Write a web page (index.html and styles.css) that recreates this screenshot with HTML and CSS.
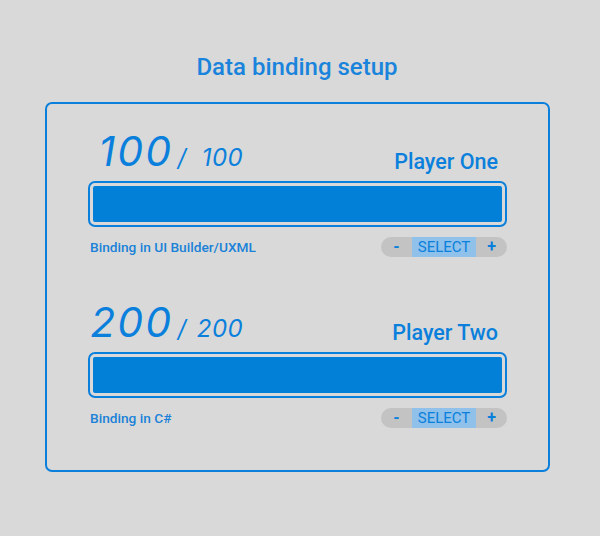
FILE: index.html
```html
<!DOCTYPE html>
<html lang="en">

<head>
    <meta charset="UTF-8">
    <meta name="viewport" content="width=device-width, initial-scale=1.0">
    <title>Data binding setup</title>
    <link rel="stylesheet" href="styles.css">
</head>

<body>
    <h1 class="titulo">Data binding setup</h1>
    <div class="panel">
        <section class="jugador">
            <div class="cabecera">
                <div class="vida">
                    <span class="actual">100</span>
                    <span class="barra-div">/</span><span class="maximo">100</span>
                </div>
                <span class="nombre">Player One</span>
            </div>
            <div class="barra">
                <div class="relleno" style="width: 100%"></div>
            </div>
            <div class="pie">
                <span class="nota">Binding in UI Builder/UXML</span>
                <div class="selector">
                    <span class="boton">-</span>
                    <span class="elegido">SELECT</span>
                    <span class="boton">+</span>
                </div>
            </div>
        </section>
        <section class="jugador">
            <div class="cabecera">
                <div class="vida">
                    <span class="actual">200</span>
                    <span class="barra-div">/</span><span class="maximo">200</span>
                </div>
                <span class="nombre">Player Two</span>
            </div>
            <div class="barra">
                <div class="relleno" style="width: 100%"></div>
            </div>
            <div class="pie">
                <span class="nota">Binding in C#</span>
                <div class="selector">
                    <span class="boton">-</span>
                    <span class="elegido">SELECT</span>
                    <span class="boton">+</span>
                </div>
            </div>
        </section>
    </div>
</body>

</html>
```

FILE: styles.css
```css
body {
    margin: 0;
    width: 600px;
    height: 536px;
    background-color: #d9d9d9;
    font-family: Roboto, "Liberation Sans", sans-serif;
    color: #0a80dc;
}

.titulo {
    margin: 0;
    padding: 54px 6px 0 0;
    height: 102px;
    box-sizing: border-box;
    text-align: center;
    font-size: 24px;
    font-weight: 500;
    line-height: 26px;
    color: #1a84dc;
}

.panel {
    margin: 0 50px 0 45px;
    height: 370px;
    box-sizing: border-box;
    border: 2px solid #0a80dc;
    border-radius: 7px;
    padding: 0 41px;
}

.jugador {
    padding-top: 26px;
}

.jugador + .jugador {
    padding-top: 44px;
}

.cabecera {
    display: flex;
    justify-content: space-between;
    align-items: baseline;
    height: 42px;
    line-height: 42px;
}

.vida {
    font-family: Inter, Roboto, sans-serif;
    font-style: italic;
}

.actual {
    display: inline-block;
    width: 85px;
    text-align: right;
    font-size: 41px;
    letter-spacing: 2px;
}

.barra-div {
    font-size: 24px;
}

.maximo {
    display: inline-block;
    width: 57px;
    text-align: right;
    font-size: 24px;
    letter-spacing: 0.5px;
}

.nombre {
    font-size: 21.5px;
    font-weight: 500;
    padding-right: 9px;
    position: relative;
    top: 3px;
}

.barra {
    margin-top: 9px;
    height: 46px;
    box-sizing: border-box;
    border: 2px solid #0a80dc;
    border-radius: 7px;
    padding: 3px 3px;
}

.relleno {
    height: 100%;
    background-color: #0280d8;
    border-radius: 2px;
}

.pie {
    margin-top: 10px;
    display: flex;
    justify-content: space-between;
    align-items: center;
    height: 20px;
}

.nota {
    font-size: 13.7px;
    font-weight: 500;
    padding-left: 2px;
    color: #1a82d8;
}

.selector {
    display: flex;
    height: 20px;
    width: 126px;
    border-radius: 10px;
    overflow: hidden;
    background-color: #c3c3c3;
    font-size: 15px;
    line-height: 20px;
}

.boton {
    flex: 1;
    text-align: center;
    font-size: 16px;
    font-weight: 700;
}

.elegido {
    width: 64px;
    text-align: center;
    background-color: #8fc1ea;
}
```
